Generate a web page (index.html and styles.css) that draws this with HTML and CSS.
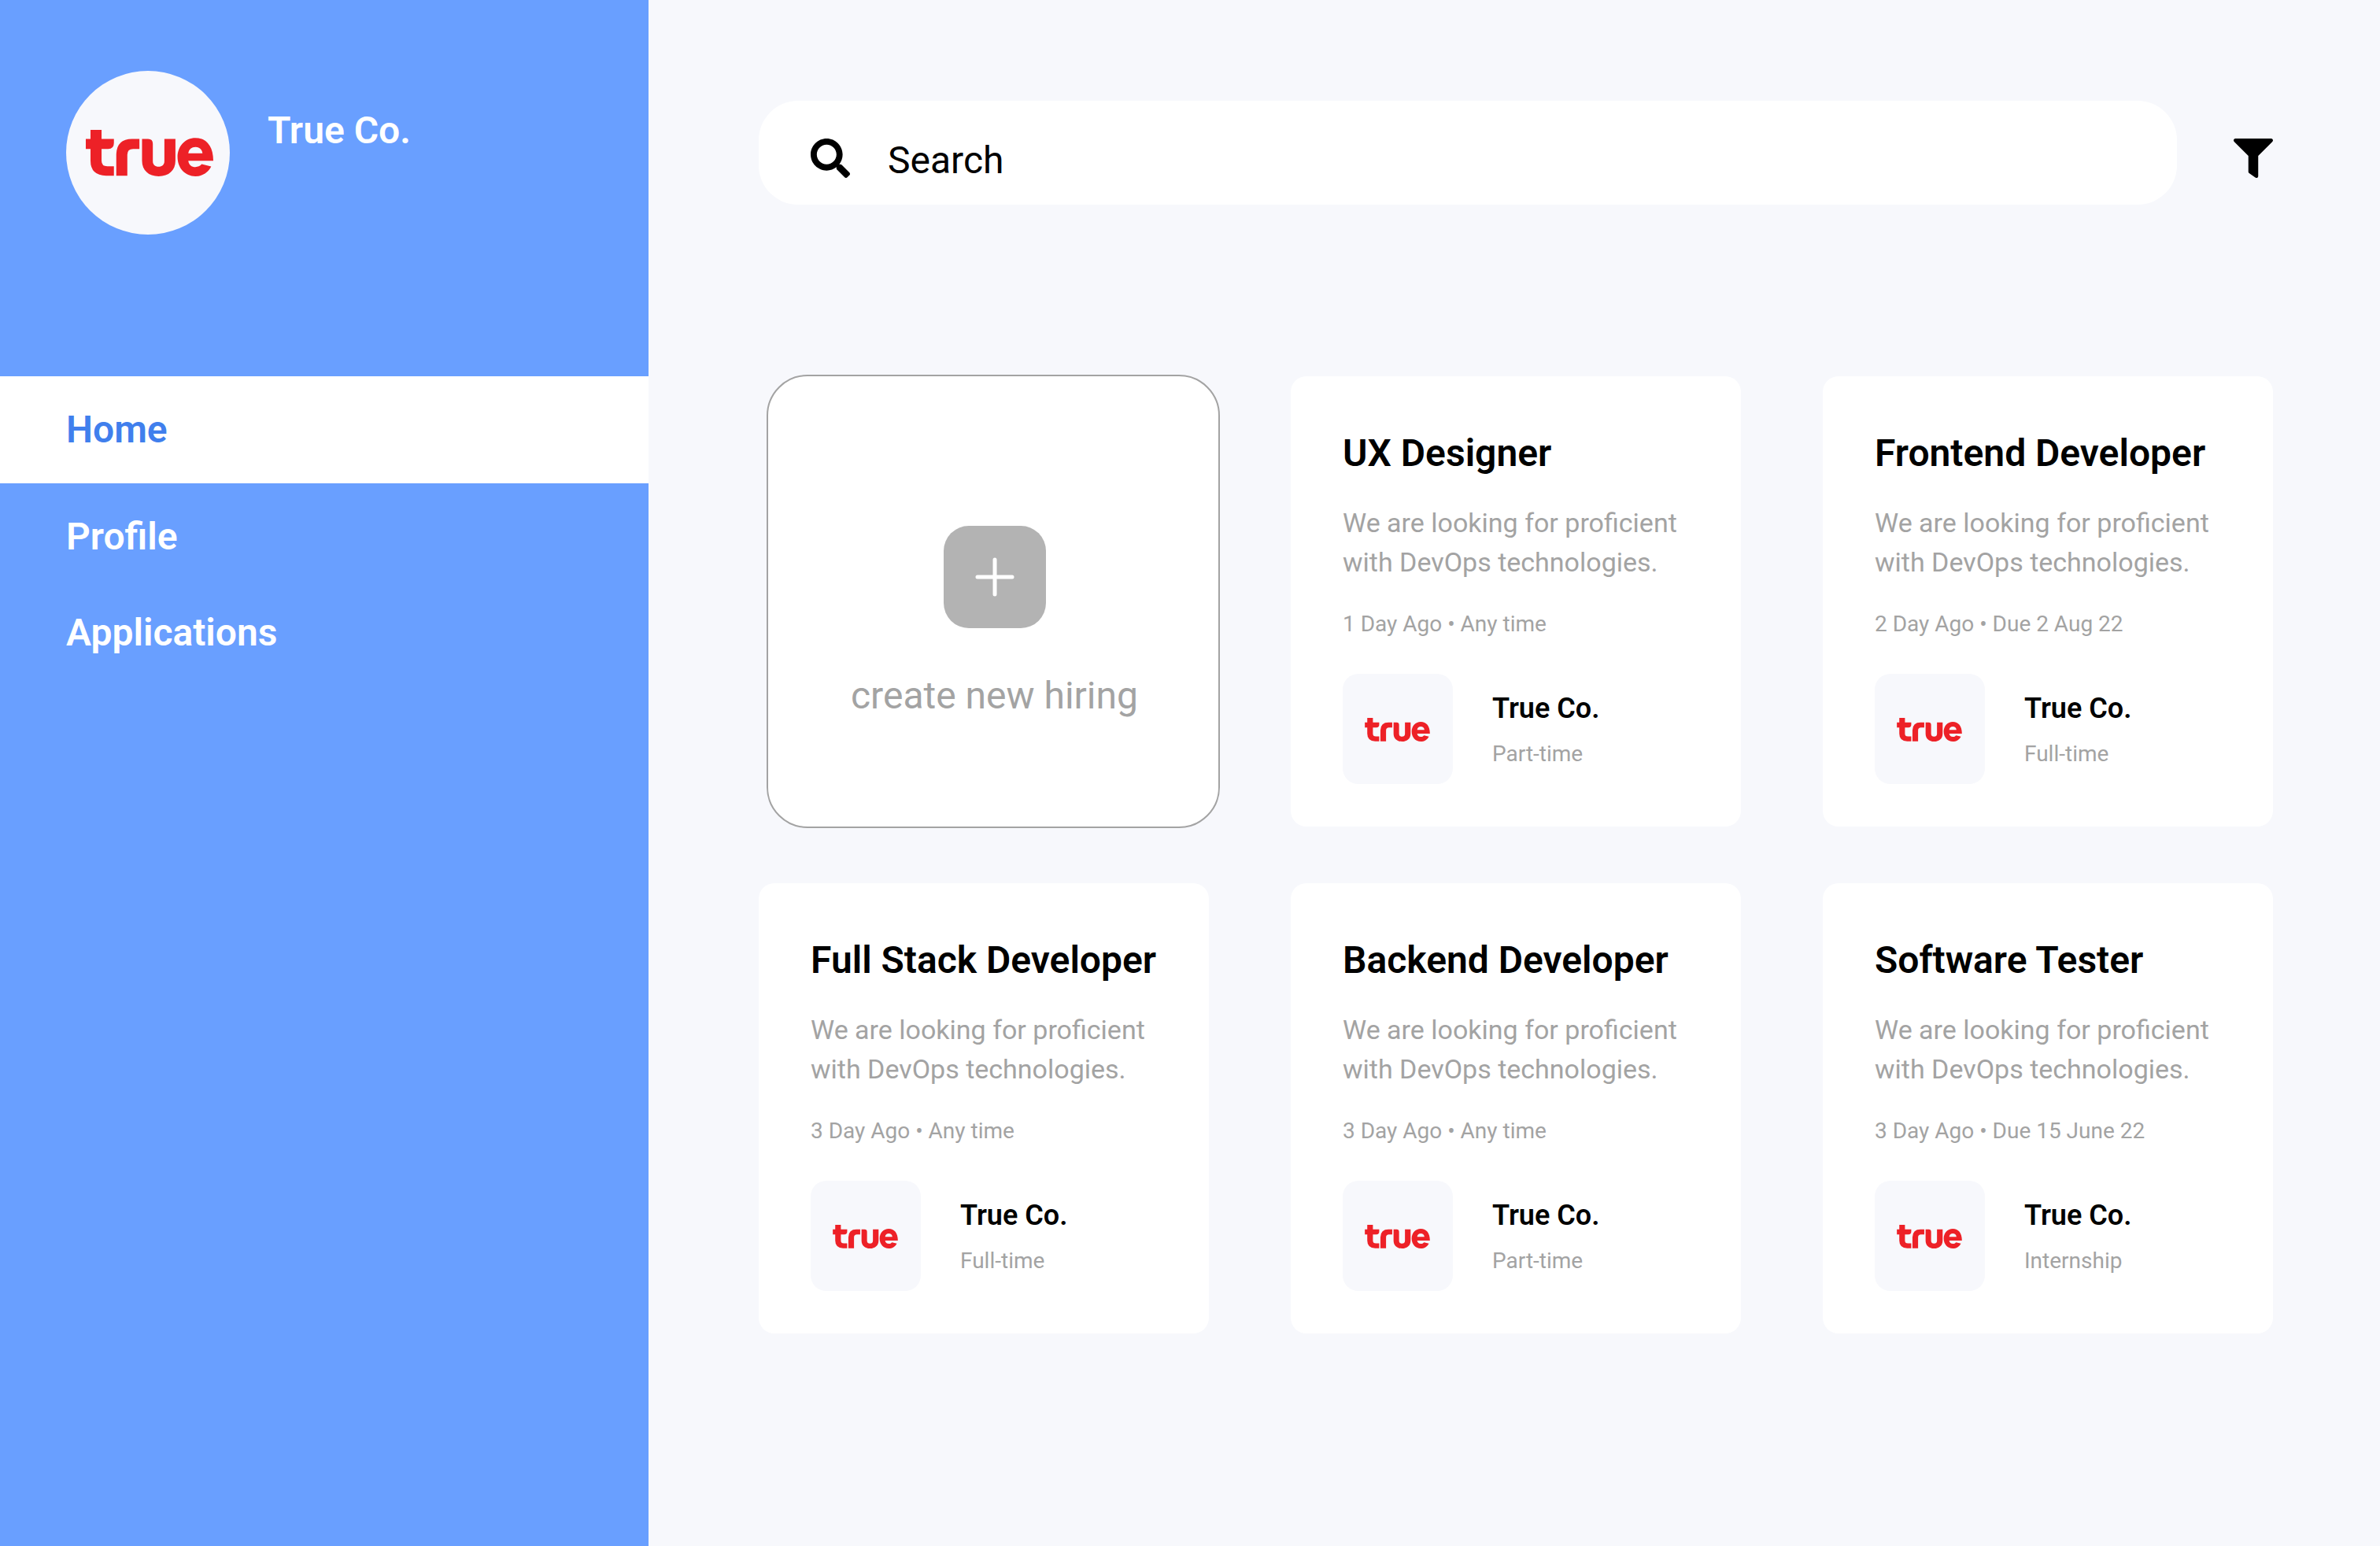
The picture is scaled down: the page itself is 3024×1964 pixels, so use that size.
FILE: index.html
```html
<!DOCTYPE html>
<html lang="en">
<head>
<meta charset="utf-8">
<meta name="viewport" content="width=device-width, initial-scale=1">
<title>True Co. – Hiring</title>
<link rel="stylesheet" href="styles.css">
</head>
<body>
<svg class="defs" aria-hidden="true">
  <symbol id="logo" viewBox="147 285 485 176">
    <path d="M165 285H207V319H254V335Q254 357 232 357H207V402Q207 423 229 423H254V459H224Q165 457 165 402V357H147V319H165Z"/>
    <path d="M351 319V357H327Q305 357 305 379V459H263V377Q265 319 323 319Z"/>
    <path d="M361 319H384Q402 319 402 337V404C402 418 411 425 424 425C437 425 446 418 446 404V319H488V402C488 438 463 461 424 461C386 461 361 438 361 402Z"/>
    <path fill-rule="evenodd" d="M632 402H537C539 418 550 426 564 426C574 426 582 422 588 415L624 424C612 448 590 461 564 461C525 461 496 430 496 388C496 346 525 315 564 315C605 315 632 346 632 402ZM537 374H591C589 358 578 350 564 350C550 350 539 358 537 374Z"/>
  </symbol>
</svg>
<div class="layout">
  <aside class="sidebar">
    <div class="brand">
      <div class="brand-avatar"><svg class="brand-logo" role="img" aria-label="true"><use href="#logo"/></svg></div>
      <p class="brand-name">True Co.</p>
    </div>
    <nav class="nav">
      <a class="nav-item nav-item-active" href="#home" aria-current="page">Home</a>
      <a class="nav-item" href="#profile">Profile</a>
      <a class="nav-item" href="#applications">Applications</a>
    </nav>
  </aside>
  <main class="main">
    <form class="toolbar" role="search">
      <label class="search">
        <svg class="icon" viewBox="0 0 512 512" aria-hidden="true"><path d="M505 442.7L405.3 343c-4.5-4.5-10.6-7-17-7H372c27.6-35.3 44-79.7 44-128C416 93.1 322.9 0 208 0S0 93.1 0 208s93.1 208 208 208c48.3 0 92.7-16.4 128-44v16.3c0 6.4 2.5 12.5 7 17l99.7 99.7c9.4 9.4 24.6 9.4 33.9 0l28.3-28.3c9.4-9.4 9.4-24.6.1-34zM208 336c-70.7 0-128-57.2-128-128 0-70.7 57.2-128 128-128 70.7 0 128 57.2 128 128 0 70.7-57.2 128-128 128z"/></svg>
        <input class="search-input" type="search" placeholder="Search" aria-label="Search">
      </label>
      <button class="filter" type="button" aria-label="Filter">
        <svg class="icon" viewBox="0 0 512 512" aria-hidden="true"><path d="M487.976 0H24.028C2.71 0-8.047 25.866 7.058 40.971L192 225.941V432c0 7.831 3.821 15.17 10.237 19.662l80 55.98C298.02 518.69 320 507.493 320 487.98V225.941l184.947-184.97C520.021 25.896 509.338 0 487.976 0z"/></svg>
      </button>
    </form>
    <section class="cards" aria-label="Open positions">
      <button class="create" type="button">
        <svg class="create-icon" viewBox="0 0 130 130" aria-hidden="true"><rect width="130" height="130" rx="32" fill="#b3b3b3"/><path d="M65 43V87M43 65H87" fill="none" stroke="#fff" stroke-width="5" stroke-linecap="round"/></svg>
        <span>create new hiring</span>
      </button>
      <article class="card">
        <h2 class="card-title">UX Designer</h2>
        <p class="card-text">We are looking for proficient with DevOps technologies.</p>
        <p class="card-meta">1 Day Ago • Any time</p>
        <div class="company">
          <div class="company-tile"><svg class="company-logo" role="img" aria-label="true"><use href="#logo"/></svg></div>
          <div class="company-info"><p class="company-name">True Co.</p><p class="card-meta">Part-time</p></div>
        </div>
      </article>
      <article class="card">
        <h2 class="card-title">Frontend Developer</h2>
        <p class="card-text">We are looking for proficient with DevOps technologies.</p>
        <p class="card-meta">2 Day Ago • Due 2 Aug 22</p>
        <div class="company">
          <div class="company-tile"><svg class="company-logo" role="img" aria-label="true"><use href="#logo"/></svg></div>
          <div class="company-info"><p class="company-name">True Co.</p><p class="card-meta">Full-time</p></div>
        </div>
      </article>
      <article class="card">
        <h2 class="card-title">Full Stack Developer</h2>
        <p class="card-text">We are looking for proficient with DevOps technologies.</p>
        <p class="card-meta">3 Day Ago • Any time</p>
        <div class="company">
          <div class="company-tile"><svg class="company-logo" role="img" aria-label="true"><use href="#logo"/></svg></div>
          <div class="company-info"><p class="company-name">True Co.</p><p class="card-meta">Full-time</p></div>
        </div>
      </article>
      <article class="card">
        <h2 class="card-title">Backend Developer</h2>
        <p class="card-text">We are looking for proficient with DevOps technologies.</p>
        <p class="card-meta">3 Day Ago • Any time</p>
        <div class="company">
          <div class="company-tile"><svg class="company-logo" role="img" aria-label="true"><use href="#logo"/></svg></div>
          <div class="company-info"><p class="company-name">True Co.</p><p class="card-meta">Part-time</p></div>
        </div>
      </article>
      <article class="card">
        <h2 class="card-title">Software Tester</h2>
        <p class="card-text">We are looking for proficient with DevOps technologies.</p>
        <p class="card-meta">3 Day Ago • Due 15 June 22</p>
        <div class="company">
          <div class="company-tile"><svg class="company-logo" role="img" aria-label="true"><use href="#logo"/></svg></div>
          <div class="company-info"><p class="company-name">True Co.</p><p class="card-meta">Internship</p></div>
        </div>
      </article>
    </section>
  </main>
</div>
</body>
</html>
```
FILE: styles.css
```css
*,
*::before,
*::after {
  box-sizing: border-box;
}

body,
h2,
p {
  margin: 0;
}

body {
  background: #f7f8fc;
  color: #000;
  font-family: Roboto, "Liberation Sans", sans-serif;
  font-size: 48px;
  line-height: 56px;
}

button,
input {
  font: inherit;
  color: inherit;
}

svg {
  display: block;
}

.defs {
  position: absolute;
  width: 0;
  height: 0;
}

.layout {
  display: grid;
  grid-template-columns: 824px minmax(0, 1fr);
  min-height: 100vh;
}

/* Sidebar */

.sidebar {
  display: flex;
  flex-direction: column;
  gap: 180px;
  padding-top: 90px;
  background: #699fff;
  color: #fff;
  font-weight: 600;
}

.brand {
  display: flex;
  gap: 48px;
  padding: 0 84px;
}

.brand-avatar {
  display: grid;
  place-items: center;
  width: 208px;
  height: 208px;
  padding-left: 4px;
  border-radius: 50%;
  background: #f7f8fc;
}

.brand-logo {
  width: 162px;
  height: 59px;
  fill: #ed2127;
}

.brand-name {
  padding-top: 48px;
}

.nav {
  display: flex;
  flex-direction: column;
}

.nav-item {
  padding: 33px 84px;
  color: inherit;
  text-decoration: none;
}

.nav-item-active {
  margin-bottom: 7px;
  padding: 40px 84px;
  background: #fff;
  color: #407fed;
}

/* Main */

.main {
  display: flex;
  flex-direction: column;
  gap: 218px;
  padding: 128px 136px 128px 140px;
}

.toolbar {
  display: flex;
  gap: 72px;
}

.search {
  flex: 1;
  display: flex;
  gap: 48px;
  padding: 48px 66px 28px;
  border-radius: 50px;
  background: #fff;
}

.icon {
  flex: none;
  width: 50px;
  height: 50px;
}

.search-input {
  flex: 1;
  min-width: 0;
  height: 56px;
  padding: 0;
  border: 0;
  outline: 0;
  background: none;
  appearance: none;
}

.search-input::placeholder {
  color: #000;
  opacity: 1;
}

.filter {
  align-self: flex-start;
  padding: 48px 0 0;
  border: 0;
  background: none;
  cursor: pointer;
}

.cards {
  display: grid;
  grid-template-columns: repeat(3, minmax(0, 1fr));
  gap: 72px 104px;
}

.create {
  display: flex;
  flex-direction: column;
  align-items: center;
  gap: 58px;
  margin: -2px -14px -2px 10px;
  padding: 190px 0 0 3px;
  border: 2px solid #a3a3a3;
  border-radius: 52px;
  background: #fff;
  color: #a3a3a3;
  cursor: pointer;
}

.create-icon {
  width: 130px;
  height: 130px;
}

.card {
  padding: 70px 66px 54px;
  border-radius: 20px;
  background: #fff;
}

.card-title {
  margin-bottom: 35px;
  font-size: 48px;
  font-weight: 600;
  white-space: nowrap;
}

.card-text {
  margin-bottom: 37px;
  color: #a3a3a3;
  font-size: 34px;
  line-height: 50px;
}

.card-meta {
  color: #a3a3a3;
  font-size: 28px;
  line-height: 33px;
}

.company {
  display: flex;
  align-items: center;
  gap: 50px;
  margin-top: 47px;
}

.company-tile {
  display: grid;
  place-items: center;
  width: 140px;
  height: 140px;
  padding: 2px 2px 0 0;
  border-radius: 20px;
  background: #f7f8fc;
}

.company-logo {
  width: 83px;
  height: 30px;
  fill: #ed2127;
}

.company-info {
  display: flex;
  flex-direction: column;
  gap: 20px;
}

.company-name {
  font-size: 36px;
  font-weight: 600;
  line-height: 42px;
}
```
